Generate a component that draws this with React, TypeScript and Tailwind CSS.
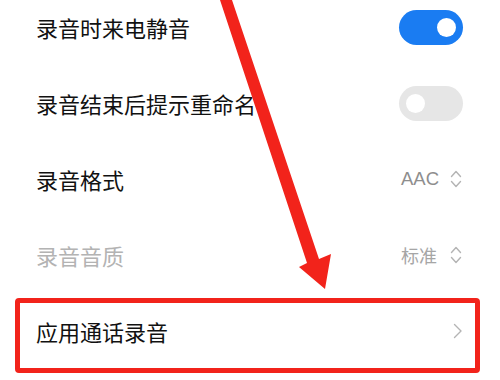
import React from "react";

const font = { fontFamily: '"Noto Sans CJK SC", "Noto Sans", sans-serif' };

function Toggle({ on }: { on: boolean }) {
  return (
    <div
      className={
        on
          ? "w-[64px] h-[35px] rounded-full bg-[#1a7cf2] flex items-center justify-end pr-[7px]"
          : "w-[64px] h-[35px] rounded-full bg-[#e6e6e6] flex items-center justify-start pl-[7px]"
      }
    >
      <div className="w-[19px] h-[19px] rounded-full bg-white" />
    </div>
  );
}

function UpDown() {
  return (
    <svg width="12" height="20" viewBox="0 0 12 20" fill="none">
      <polyline points="1.5,7.5 6,2.5 10.5,7.5" stroke="#b4b4b4" strokeWidth="1.4" strokeLinecap="round" strokeLinejoin="round" />
      <polyline points="1.5,12.5 6,17.5 10.5,12.5" stroke="#b4b4b4" strokeWidth="1.4" strokeLinecap="round" strokeLinejoin="round" />
    </svg>
  );
}

function ChevronRight() {
  return (
    <svg width="10" height="16" viewBox="0 0 10 16" fill="none">
      <polyline points="1.5,1.5 8,8 1.5,14.5" stroke="#b4b4b4" strokeWidth="1.4" strokeLinecap="round" strokeLinejoin="round" />
    </svg>
  );
}

export default function App() {
  return (
    <div className="relative w-[500px] h-[380px] overflow-hidden bg-white" style={font}>
      <div className="flex flex-col mt-[-11px]">
        <div className="flex items-center justify-between h-[76px] pl-[36px] pr-[37px]">
          <span className="text-[22px] text-[#111111]">录音时来电静音</span>
          <Toggle on={true} />
        </div>
        <div className="flex items-center justify-between h-[76px] pl-[36px] pr-[37px]">
          <span className="text-[22px] text-[#111111]">录音结束后提示重命名</span>
          <Toggle on={false} />
        </div>
        <div className="flex items-center justify-between h-[76px] pl-[36px] pr-[38px]">
          <span className="text-[22px] text-[#111111]">录音格式</span>
          <div className="flex items-center gap-[11px]">
            <span className="text-[18.5px] text-[#8e8e8e]" style={{ fontFamily: '"Liberation Sans", "Noto Sans CJK SC", sans-serif' }}>AAC</span>
            <UpDown />
          </div>
        </div>
        <div className="flex items-center justify-between h-[76px] pl-[36px] pr-[38px]">
          <span className="text-[22px] text-[#b3b3b3]">录音音质</span>
          <div className="flex items-center gap-[13px]">
            <span className="text-[18px] text-[#a6a6a6]">标准</span>
            <UpDown />
          </div>
        </div>
        <div className="flex items-center justify-between h-[76px] pl-[36px] pr-[37px]">
          <span className="text-[22px] text-[#111111]">应用通话录音</span>
          <ChevronRight />
        </div>
      </div>

      {/* annotation: red rectangle */}
      <div className="absolute left-[15px] top-[298px] w-[465px] h-[75px] border-[5px] border-[#f2231b] rounded-[4px]" />

      {/* annotation: red arrow */}
      <svg className="absolute left-0 top-0" width="500" height="380" viewBox="0 0 500 380">
        <polygon
          points="220,0 232,0 319,259 331,254 325,289 299,267 307,263"
          fill="#f2231b"
        />
      </svg>
    </div>
  );
}
